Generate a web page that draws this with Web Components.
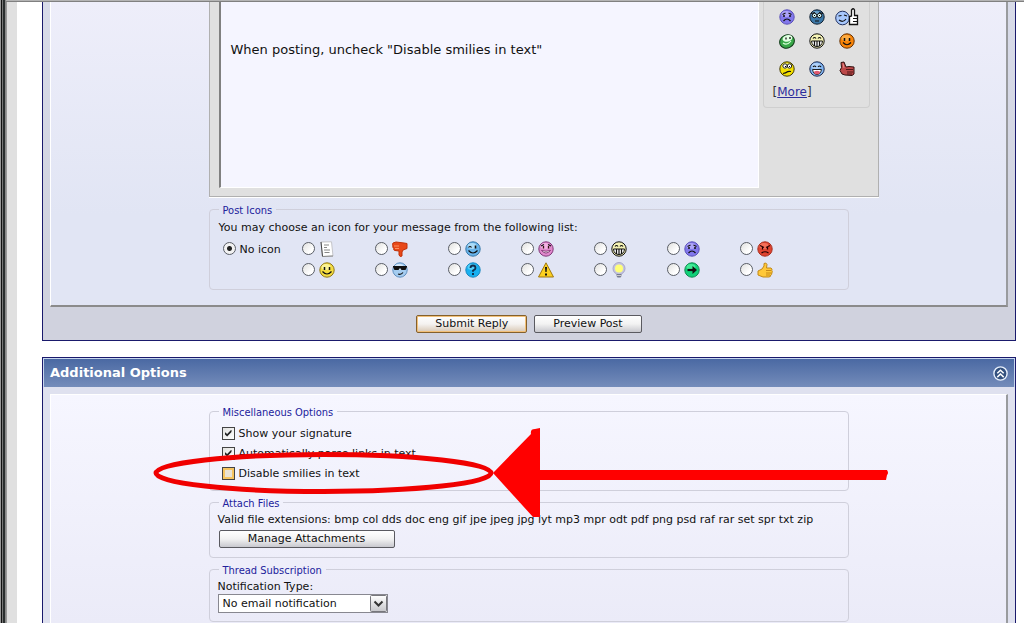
<!DOCTYPE html>
<html lang="en">
<head>
<meta charset="utf-8">
<title>Reply to Thread</title>
<style>
  html, body { margin: 0; }
  body { font: 11px/16px "DejaVu Sans", Verdana, sans-serif; color: #111; background: #fff; }
  .lead { margin: 0; line-height: 18px; }
  .tight { margin: 0; }
</style>
</head>
<body>
<forum-frame>
  <forum-panel open-top>
    <post-editor></post-editor>
    <option-group label="Post Icons" class="icons">
      <p class="lead">You may choose an icon for your message from the following list:</p>
      <icon-choices></icon-choices>
    </option-group>
    <push-button slot="footer" primary>Submit Reply</push-button>
    <push-button slot="footer">Preview Post</push-button>
  </forum-panel>
  <forum-panel heading="Additional Options" open-bottom>
    <option-group label="Miscellaneous Options">
      <check-option checked>Show your signature</check-option>
      <check-option checked>Automatically parse links in text</check-option>
      <check-option hot>Disable smilies in text</check-option>
      <callout-arrow></callout-arrow>
    </option-group>
    <option-group label="Attach Files" class="files">
      <p class="tight">Valid file extensions: bmp col dds doc eng gif jpe jpeg jpg lyt mp3 mpr odt pdf png psd raf rar set spr txt zip</p>
      <push-button wide>Manage Attachments</push-button>
    </option-group>
    <option-group label="Thread Subscription" class="thread">
      <notify-select></notify-select>
    </option-group>
  </forum-panel>
</forum-frame>

<script>
const define = (name, build) => customElements.define(name, class extends HTMLElement {
  constructor() {
    super();
    this.attachShadow({ mode: 'open' });
  }
  connectedCallback() {
    if (this.shadowRoot.childNodes.length) return;
    const t = document.createElement('template');
    t.innerHTML = build(this);
    this.shadowRoot.append(t.content.cloneNode(true));
  }
});

define('forum-frame', () => `
  <style>
    :host { display: flex; flex-direction: column; gap: 16px; box-sizing: border-box; min-height: 100vh;
      padding: 2px 8px 0 42px;
      background:
        linear-gradient(#b4b4b4 0 1px, #808080 1px 2px) 6px 0 / 100% 2px no-repeat,
        linear-gradient(90deg, #999 0 1px, #111 1px 2px, #777 2px 3px, #2a2e2e 3px 5px, #888 5px 6px, #999 6px 7px, #e0e0e0 7px 17px, #fff 17px) 0 0 / 100% 100%; }
    ::slotted(:last-child) { flex: 1; }
  </style>
  <slot></slot>`);

define('forum-panel', el => {
  const heading = el.getAttribute('heading');
  return `
  <style>
    :host { display: flex; flex-direction: column; border: 1px solid #1a1a6c; background: #dfe1ef; }
    :host([open-top]) { border-top: 0; background: linear-gradient(#d8dbe9, #d0d2de 80%); }
    :host([open-bottom]) { border-bottom: 0; }
    header { display: flex; align-items: center; justify-content: space-between; height: 29px; padding: 0 6px; margin-bottom: 7px;
      box-sizing: border-box; border: 1px solid #c8d6ee; border-bottom: 0; background: linear-gradient(#4a69a3, #748cba); }
    h2 { margin: 0; font-size: 13px; line-height: 16px; color: #fff; }
    header button { display: block; width: 15px; height: 15px; padding: 0; border: 0; background: none; }
    svg { display: block; }
    main { flex: 1; margin: 0 7px; border: solid; border-width: 0 2px 2px 1px; border-color: #fff #999b9e #8b8b8b #fff; background: linear-gradient(#eeeefa, #e1e5f4 70%); padding-bottom: 15px; }
    :host([open-bottom]) main { border-bottom: 0; border-top-width: 1px; padding: 8px 0 0; background: linear-gradient(#f6f6ff, #ebebf8); }
    .column { display: flex; flex-direction: column; max-width: 640px; margin: 0 auto; gap: 3px; }
    :host([open-top]) .column { gap: 4px; }
    footer { display: flex; justify-content: center; align-items: center; gap: 7px; height: 33px; }
  </style>
  ${heading ? `<header><h2>${heading}</h2><button type="button" aria-label="Collapse">
    <svg width="15" height="15" viewBox="0 0 15 15"><circle cx="7.5" cy="7.5" r="6.6" fill="#33517f" stroke="#e8f0fc" stroke-width="1.4"/><path d="M4.3 7.3 7.5 4.2l3.200 3.100M4.300 11.100 7.500 8l3.200 3.100" fill="none" stroke="#fff" stroke-width="1.500"/></svg></button></header>` : ''}
  <main><div class="column"><slot></slot></div></main>
  ${heading ? '' : '<footer><slot name="footer"></slot></footer>'}`;
});

define('option-group', el => `
  <style>
    :host { display: block; position: relative; }
    fieldset { margin: 0; min-width: 0; border: 1px solid #cfcfdb; border-radius: 4px; padding: 4px 9px 6px; }
    legend { margin: 0; padding: 3px 4px 0; line-height: 14px; color: #22229c; font-family: "DejaVu Sans Condensed", Tahoma, sans-serif; }
    :host(.icons) fieldset { padding: 1px 9px 9px; }
    :host(.files) fieldset { padding: 1px 0 9px 8px; }
    :host(.thread) fieldset { padding: 1px 8px 8px; }
    :host(.files) legend, :host(.thread) legend { margin-left: 1px; }
  </style>
  <fieldset><legend>${el.getAttribute('label')}</legend><slot></slot></fieldset>`);

define('push-button', el => `
  <style>
    :host { display: block; }
    :host([wide]) { margin: 2px 0 0 1px; }
    button { display: block; box-sizing: border-box; height: 18px; padding: 0 18px; border: 1px solid #5a5a60; border-radius: 2px;
      background: linear-gradient(#fff, #f2f2f2 50%, #c8c8ce); font: inherit; line-height: 16px; color: #111; white-space: nowrap; }
    :host([primary]) button { border-color: #84602c; background: linear-gradient(#fff, #f4f2f0 50%, #d8c8b4); box-shadow: inset 0 0 0 1px #f2c078; }
    :host([wide]) button { width: 176px; }
  </style>
  <button type="button"><slot></slot></button>`);

define('check-option', el => `
  <style>
    :host { display: block; }
    label { display: flex; align-items: center; gap: 4px; height: 20px; }
    input { appearance: none; box-sizing: border-box; display: grid; place-items: center; width: 13px; height: 13px; margin: 0 0 2px 3px; border: 1px solid #444; background: linear-gradient(135deg, #e2e2e0, #fff); }
    input:checked::before { content: ""; width: 7px; height: 7px; background: #222; clip-path: polygon(0 32%, 38% 64%, 100% 0, 100% 36%, 38% 100%, 0 66%); }
    .hot { background: #e9e2d4; box-shadow: inset 0 0 0 2px #f6c560; }
  </style>
  <label><input type="checkbox" ${el.hasAttribute('checked') ? 'checked' : ''} class="${el.hasAttribute('hot') ? 'hot' : ''}"><span><slot></slot></span></label>`);

define('notify-select', () => `
  <style>
    :host { display: block; }
    label { display: block; line-height: 15px; }
    .box { position: relative; width: 170px; }
    select { appearance: none; display: block; box-sizing: border-box; width: 100%; height: 19px; padding: 0 20px 0 4px; border: 1px solid #888890; border-radius: 0; background: #fff; font: inherit; line-height: 17px; color: #111; }
    svg { position: absolute; top: 1px; right: 1px; pointer-events: none; }
  </style>
  <label for="type">Notification Type:</label>
  <div class="box"><select id="type"><option>No email notification</option></select>
    <svg width="17" height="17" viewBox="0 0 17 17"><defs><linearGradient id="g" x2="0" y2="1"><stop stop-color="#fff"/><stop offset="1" stop-color="#c6c6ca"/></linearGradient></defs><rect x=".5" y=".5" width="16" height="16" rx="1" fill="url(#g)" stroke="#77777c"/><path d="M4.500 6.500l4 4 4-4" fill="none" stroke="#333" stroke-width="2"/></svg>
  </div>`);

define('callout-arrow', () => `
  <style>
    :host { position: absolute; z-index: 1; left: -60px; top: 20px; pointer-events: none; }
    svg { display: block; }
  </style>
  <svg width="745" height="100" viewBox="0 0 745 100" aria-hidden="true">
    <ellipse cx="174.500" cy="50" rx="167.500" ry="18.500" fill="none" stroke="#f00000" stroke-width="5"/>
    <path d="M344 50 382 11q-1-5 4-5l5-1v42h344l3 0q2 3 0 5l-1 5H391v37h-7z" fill="#f00"/>
  </svg>`);

/* Faces share a shaded disc; only the features differ. */
const disc = (light, mid, edge) => `<circle cx="8" cy="8" r="7.200" fill="${mid}" stroke="${edge}"/><ellipse cx="7" cy="5" rx="4.500" ry="3" fill="${light}" opacity=".65"/>`;
const eyes = '<path d="M5.500 5v3M10.500 5v3" stroke="#111" stroke-width="1.500"/>';
const line = (d, c = '#111', w = 1.2) => `<path d="${d}" fill="none" stroke="${c}" stroke-width="${w}"/>`;
const glyphs = {
  sad: disc('#c4bcff', '#8278ec', '#5a50b8') + line('M3.500 5.500l3-1.500M12.500 5.500l-3-1.500') + '<path d="M5 6v2M11 6v2" stroke="#111" stroke-width="1.500"/>' + line('M4.500 12q3.500-4 7 0'),
  nerd: disc('#82b8dc', '#3c78a8', '#102030') + '<circle cx="5.500" cy="6.500" r="2.200" fill="#dff" stroke="#111"/><circle cx="10.500" cy="6.500" r="2.200" fill="#dff" stroke="#111"/><path d="M5 6h1v1H5zM10 6h1v1h-1z"/>' + line('M2 4.500l4-1M14 4.500l-4-1M6 12h4'),
  green: '<ellipse cx="8" cy="8.500" rx="7.500" ry="6.500" transform="rotate(-25 8 8.500)" fill="#38a848" stroke="#103818"/><ellipse cx="8.500" cy="5.500" rx="5" ry="3.200" transform="rotate(-15 8 5.500)" fill="#e4ffe4"/><path d="M7 4.500v2M11 4v2" stroke="#111" stroke-width="1.300"/>' + line('M4 10q4 3 8-2', '#d8ffd8', 1.2),
  grin: '<circle cx="8" cy="8" r="7.200" fill="#f4f2b4" stroke="#111"/>' + line('M4 5.500q1.500-2 3 0M9 5.500q1.500-2 3 0') + '<path d="M2.500 8h11q-.5 5.500-5.500 5.500T2.500 8z" fill="#fff" stroke="#111"/>' + line('M5.500 8v5M8 8v5M10.500 8v5'),
  orange: disc('#ffc060', '#f88408', '#663000') + eyes + line('M4 9.500q4 4.500 8 0'),
  doubt: disc('#ffffa0', '#f4e000', '#403800') + '<circle cx="6" cy="5" r="2.200" fill="#fff" stroke="#222"/><circle cx="10.500" cy="5" r="2.200" fill="#fff" stroke="#222"/><path d="M6 5h1v1H6zM10 5h1v1h-1z"/>' + line('M4 12.500q3-.5 4-1.500t4-.5'),
  laugh: disc('#c8e0ff', '#80b4f0', '#182850') + line('M4 6q1.500-2 3 0M9 6q1.500-2 3 0') + '<path d="M3.500 8.500h9q-1 5-4.500 5t-4.500-5z" fill="#fff" stroke="#222"/><ellipse cx="8" cy="11.500" rx="3" ry="1.800" fill="#e05870"/>',
  redthumb: '<path d="M2 1.500 5 1l2 5 3-.5 5 .5v7l-2 1.500-7-.5-3-1-2-3.500 1.500-3z" fill="#bc4848" stroke="#301010"/>' + line('M7 8.500h7M8 11h6M8 13h5', '#501818', 1) + line('M4 2.500 5 7', '#e89090', 1),
  thumbface: '<circle cx="7.500" cy="10" r="6.800" fill="#a8c8fc" stroke="#203060"/>' + line('M3.500 8l3-.5M9 7l3 1M4 12q4 3 7-1') + '<path d="M16.500 8V2q2-2.500 3 0v5.500h3v9h-8v-8z" fill="#fff" stroke="#111" stroke-width="1.300"/>' + line('M18 10.500h4M18 13.500h4'),
  page: '<path d="M2 1 12.500.8 14 15 3.500 15.500z" fill="#fff" stroke="#c4c4c8"/><path d="M2 1l1.500 14.500" stroke="#444"/><path d="M3.500 15.500 14 15" stroke="#888"/>' + line('M5 4h5M5 6.500h3M5 9h6M5.500 11.500h5', '#888', 1),
  down: '<path d="M1 2 4 1l4 .5L12 2l3 .5v5L11 9l-1 2v4q-2 1.500-3-1V10L3 9.500Q1 9 2 7.500 0 6.500 1 5 0 3.500 1 2z" fill="#e84818" stroke="#c03008"/>' + line('M2 5h5M3 7.500h4', '#ff9060', 1),
  wink: disc('#d0f0ff', '#68b4ec', '#3878a8') + line('M3.500 6.500q1.500-2 3 0') + '<path d="M10.500 4.500v3" stroke="#111" stroke-width="1.600"/>' + line('M3.500 9.500q4.500 5 9 0'),
  pink: disc('#ffc8f0', '#e088cc', '#803878') + line('M3 5l3-1.500M13 5l-3-1.500') + '<path d="M5.500 5v2.500M10.500 5v2.500" stroke="#311" stroke-width="1.300"/><path d="M3.500 9.500q4.500 5 9 0-4.500 1.500-9 0z" fill="#fff" stroke="#702060" stroke-width=".8"/>',
  angry: disc('#ff8870', '#e04430', '#a83020') + line('M3 4.500l4 2M13 4.500l-4 2', '#300') + '<path d="M5.500 6v2.500M10.500 6v2.500" stroke="#200" stroke-width="1.300"/>' + line('M4.500 12q3.500-2.500 7 0', '#200'),
  smile: disc('#ffffc0', '#f4dc40', '#907818') + eyes + line('M3.500 9.500q4.500 5 9 0'),
  cool: disc('#f0f8ff', '#a4ccf0', '#6090c0') + '<path d="M1 4h14v1L13.500 8h-4L8 6 6.500 8h-4L1 5z" fill="#111"/>' + line('M6 12q3 1 5-1.500'),
  question: disc('#70e0ff', '#18b0f0', '#1888c0') + line('M5.500 6q0-2.500 2.500-2.500T10.500 6Q10.500 7.500 8 8.500v1.200', '#103050', 1.8) + '<path d="M7 11h2v2H7z" fill="#103050"/>',
  warn: '<path d="M8 .8 15.500 15H.5z" fill="#fcd020" stroke="#a07810" stroke-linejoin="round"/><path d="M7 5h2l-.4 5H7.400zM7 11.500h2v2H7z" fill="#111"/>',
  bulb: '<circle cx="8" cy="6.500" r="6" fill="#c4c4e0" stroke="#a8a8c8"/><circle cx="8" cy="6.500" r="4" fill="#ffff78"/><path d="M5.500 12h5v2l-1 1.500h-3l-1-1.500z" fill="#777c90"/><path d="M5.500 13.500h5" stroke="#ccc"/>',
  arrow: disc('#60f8a8', '#10d078', '#108850') + line('M3.500 8h7', '#111', 2.2) + '<path d="M8.500 4 13 8l-4.500 4z" fill="#111"/>',
  up: '<path d="M1 9 5 7 7 4V1.500q2-1.500 3 1L9.500 6H14q1.500 1 .8 2.500 1 1 0 2.500.3 1.500-1 2 0 2-2 2H6L1 13z" fill="#ffc838" stroke="#c08818"/>' + line('M9 8.500h5M9 11h5M9 13h4', '#b87810', .8)
};
define('forum-icon', el => {
  const big = el.getAttribute('kind') === 'thumbface';
  return `
  <style>:host { display: block; } svg { display: block; }</style>
  <svg width="${big ? 24 : 16}" height="${big ? 18 : 16}" viewBox="0 0 ${big ? '24 18' : '16 16'}" aria-hidden="true">${glyphs[el.getAttribute('kind')]}</svg>`;
});

define('icon-choices', () => `
  <style>
    :host { display: grid; grid-template-columns: 79px repeat(7, 73px); grid-auto-rows: 21px; margin: 1px 0 0 4px; }
    label { display: flex; align-items: center; gap: 4px; }
    label:nth-of-type(9) { grid-column: 2; }
    input { appearance: none; flex: none; box-sizing: border-box; width: 13px; height: 13px; margin: 0; border: 1px solid #5a5e66; border-radius: 50%; background: linear-gradient(135deg, #e0e0de, #fff 70%); }
    input:checked { background: radial-gradient(circle, #222 0 2px, #f2f2f2 3px); }
    span { padding-top: 3px; }
  </style>
  <label><input type="radio" name="icon" checked><span>No icon</span></label>
  ${['page', 'down', 'wink', 'pink', 'grin', 'sad', 'angry', 'smile', 'cool', 'question', 'warn', 'bulb', 'arrow', 'up']
    .map(k => `<label><input type="radio" name="icon" aria-label="${k}"><forum-icon kind="${k}"></forum-icon></label>`).join('')}`);

define('post-editor', () => `
  <style>
    :host { display: flex; align-items: flex-start; gap: 4px; box-sizing: border-box; width: 670px; height: 195px; padding: 0 8px 8px 9px;
      background: #e0e0e0; border: 1px solid #b0b0b0; border-top: 0; box-shadow: 0 1px #fff; }
    textarea { display: block; flex: 1; box-sizing: border-box; height: 186px; margin: 0; padding: 40px 10px 0; resize: none; overflow: hidden;
      border: 1px solid #fff; border-top: 0; border-left: 2px solid #808080; border-radius: 0; background: #f5f5ff; font: 13px/16px "DejaVu Sans", Verdana, sans-serif; color: #111; }
    aside { box-sizing: border-box; width: 107px; height: 106px; padding: 3px 0 0 8px; border: 1px solid #cfcfcf; border-top: 0; border-radius: 0 0 4px 4px; }
    .grid { display: grid; grid-template: 24px 24px 32px / repeat(3, 30px); place-items: center; }
    p { margin: 0; padding: 0 1px; font-size: 12px; line-height: 14px; color: #333; }
    a { color: #2c2c9c; }
  </style>
  <textarea aria-label="Message">When posting, uncheck "Disable smilies in text"</textarea>
  <aside><div class="grid">
    ${['sad', 'nerd', 'thumbface', 'green', 'grin', 'orange', 'doubt', 'laugh', 'redthumb'].map(k => `<forum-icon kind="${k}"></forum-icon>`).join('')}
  </div><p>[<a href="#more">More</a>]</p></aside>`);
</script>
</body>
</html>
